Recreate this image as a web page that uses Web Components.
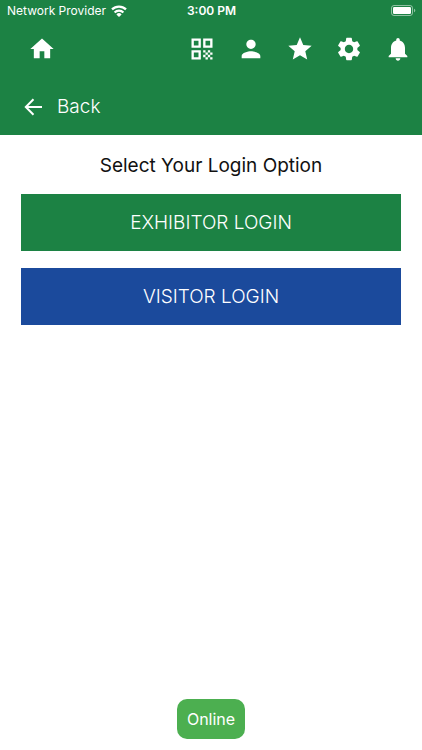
<!DOCTYPE html>
<html lang="en">
<head>
<meta charset="utf-8">
<meta name="viewport" content="width=device-width, initial-scale=1">
<title>Login</title>
<style>
  html, body { height: 100%; }
  body {
    margin: 0;
    background: #fff;
    color: #111;
    font-family: Inter, "Liberation Sans", sans-serif;
    --brand: #1c8244;
    --visitor: #1b4a9c;
  }
</style>
</head>

<template id="status-bar-template">
  <style>
    :host {
      display: grid;
      grid-template-columns: 1fr auto 1fr;
      align-items: center;
      height: 22px;
      padding: 0 6px 0 7px;
      font-size: 12px;
      line-height: 22px;
    }
    .carrier { display: flex; align-items: center; gap: 5px; white-space: nowrap; }
    .time { font-weight: 600; }
    .battery { justify-self: end; }
    svg { display: block; }
  </style>
  <div class="carrier">
    <slot name="carrier"></slot>
    <svg width="16" height="12" viewBox="0 0 16 12" fill="none" stroke="#fff" stroke-width="2.2" aria-hidden="true">
      <path d="M1 4.4a10 10 0 0 1 14 0M3.6 7.400a6.200 6.200 0 0 1 8.800 0"/>
      <path d="M8 12 5.400 9.400a3.600 3.600 0 0 1 5.200 0z" fill="#fff" stroke="none"/>
    </svg>
  </div>
  <div class="time"><slot name="time"></slot></div>
  <svg class="battery" width="25" height="12" viewBox="0 0 25 12" aria-hidden="true">
    <rect x=".5" y=".5" width="21" height="10" rx="2.5" fill="none" stroke="#fff" stroke-opacity=".5"/>
    <rect x="2" y="2" width="18" height="7" rx="1.2" fill="#fff"/>
    <path d="M23 3.7v3.6c.8-.3 1.3-1 1.3-1.8s-.5-1.500-1.300-1.800z" fill="#fff" fill-opacity=".5"/>
  </svg>
</template>

<template id="icon-button-template">
  <style>
    :host { display: block; }
    button {
      display: flex;
      align-items: center;
      justify-content: center;
      width: 49px;
      height: 54px;
      margin: 0;
      padding: 0;
      border: 0;
      background: none;
      color: inherit;
      cursor: pointer;
    }
    svg { display: block; fill: currentColor; }
  </style>
  <button type="button"><svg width="28" height="28" viewBox="0 0 24 24" aria-hidden="true"></svg></button>
</template>

<template id="app-header-template">
  <style>
    :host { display: block; background: var(--brand); color: #fff; }
    nav { display: flex; padding-left: 17px; height: 54px; }
    .actions { display: flex; margin-left: auto; }
    .back {
      display: flex;
      align-items: center;
      gap: 12px;
      width: max-content;
      height: 57px;
      padding: 2px 21px 0;
      color: inherit;
      font-size: 19px;
      font-weight: 300;
      line-height: 24px;
      text-decoration: none;
    }
    .back svg { display: block; fill: none; stroke: currentColor; stroke-width: 2; }
  </style>
  <slot name="status"></slot>
  <nav aria-label="Main">
    <slot name="home"></slot>
    <div class="actions"><slot></slot></div>
  </nav>
  <a class="back" href="#back">
    <svg width="24" height="24" viewBox="0 0 24 24" aria-hidden="true">
      <path d="M21 12H5M12.500 4.300 4.800 12l7.700 7.700"/>
    </svg>
    <slot name="back"></slot>
  </a>
</template>

<template id="login-button-template">
  <style>
    :host { display: block; }
    button {
      display: block;
      width: 100%;
      height: 57px;
      margin: 0;
      padding: 0;
      border: 0;
      background: var(--button-color, var(--brand));
      color: #fff;
      font: inherit;
      font-size: 19px;
      font-weight: 300;
      line-height: 24px;
      cursor: pointer;
    }
  </style>
  <button type="button"><slot></slot></button>
</template>

<template id="online-status-template">
  <style>
    :host {
      display: block;
      padding: 8px 10px;
      border-radius: 10px;
      background: #4caf50;
      color: #fff;
      font-size: 16px;
      line-height: 24px;
    }
  </style>
  <slot></slot>
</template>

<template id="login-page-template">
  <style>
    :host { display: flex; flex-direction: column; min-height: 100%; }
    main {
      display: flex;
      flex-direction: column;
      gap: 17px;
      flex: 1;
      padding: 20px 21px;
    }
    h1 {
      margin: 0;
      font-size: 19px;
      font-weight: 400;
      line-height: 22px;
      text-align: center;
    }
    footer { display: flex; justify-content: center; padding-bottom: 11px; }
  </style>
  <app-header>
    <status-bar slot="status">
      <span slot="carrier">Network Provider</span>
      <span slot="time">3:00 PM</span>
    </status-bar>
    <icon-button slot="home" icon="home" label="Home"></icon-button>
    <icon-button icon="qr" label="QR code"></icon-button>
    <icon-button icon="person" label="Profile"></icon-button>
    <icon-button icon="star" label="Favourites"></icon-button>
    <icon-button icon="gear" label="Settings"></icon-button>
    <icon-button icon="bell" label="Notifications"></icon-button>
    <span slot="back">Back</span>
  </app-header>
  <main>
    <h1>Select Your Login Option</h1>
    <login-button>EXHIBITOR LOGIN</login-button>
    <login-button style="--button-color: var(--visitor)">VISITOR LOGIN</login-button>
  </main>
  <footer><online-status>Online</online-status></footer>
</template>

<body>
<login-page></login-page>
<script>

const icons = {
  home: 'M10 20v-6h4v6h5v-8h3L12 3 2 12h3v8z',
  qr: 'M3 11h8V3H3zm2-6h4v4H5zM3 21h8v-8H3zm2-6h4v4H5zM13 3v8h8V3zm6 6h-4V5h4zM19 19h2v2h-2zM13 13h2v2h-2zM15 15h2v2h-2zM13 17h2v2h-2zM15 19h2v2h-2zM17 17h2v2h-2zM17 13h2v2h-2zM19 15h2v2h-2z',
  person: 'M12 12c2.210 0 4-1.790 4-4s-1.790-4-4-4-4 1.790-4 4 1.790 4 4 4zm0 2c-2.670 0-8 1.340-8 4v2h16v-2c0-2.660-5.330-4-8-4z',
  star: 'M12 17.270 18.180 21l-1.640-7.030L22 9.240l-7.190-.61L12 2 9.190 8.630 2 9.240l5.460 4.730L5.820 21z',
  gear: 'M19.140 12.940c.04-.3.06-.61.06-.94 0-.32-.02-.64-.07-.94l2.030-1.580c.18-.14.23-.41.12-.61l-1.920-3.320c-.12-.22-.37-.29-.59-.22l-2.390.96c-.5-.38-1.030-.7-1.620-.94l-.36-2.540c-.04-.24-.24-.41-.48-.41h-3.840c-.24 0-.43.17-.47.41l-.36 2.540c-.59.24-1.130.57-1.620.94l-2.390-.96c-.22-.08-.47 0-.59.22L2.740 8.870c-.12.21-.08.47.12.61l2.030 1.580c-.05.3-.09.63-.09.94s.02.64.07.94l-2.030 1.580c-.18.14-.23.41-.12.61l1.920 3.320c.12.22.37.29.59.22l2.390-.96c.5.38 1.030.7 1.620.94l.36 2.540c.05.24.24.41.48.41h3.840c.24 0 .44-.17.47-.41l.36-2.540c.59-.24 1.130-.56 1.620-.94l2.390.96c.22.08.47 0 .59-.22l1.920-3.320c.12-.22.07-.47-.12-.61zM12 15.600c-1.980 0-3.600-1.620-3.600-3.600s1.620-3.600 3.600-3.600 3.600 1.620 3.600 3.600-1.620 3.600-3.600 3.600z',
  bell: 'M12 22c1.100 0 2-.9 2-2h-4c0 1.100.89 2 2 2zm6-6v-5c0-3.070-1.640-5.640-4.500-6.320V4c0-.83-.67-1.500-1.500-1.500s-1.500.67-1.500 1.500v.68C7.630 5.360 6 7.920 6 11v5l-2 2v1h16v-1z'
};

/* Clone a template into an open shadow root */
class TemplateElement extends HTMLElement {
  constructor() {
    super();
    const template = document.getElementById(this.localName + '-template');
    this.attachShadow({mode: 'open'}).appendChild(template.content.cloneNode(true));
  }
}

customElements.define('status-bar', class extends TemplateElement {});
customElements.define('app-header', class extends TemplateElement {});
customElements.define('login-button', class extends TemplateElement {});
customElements.define('online-status', class extends TemplateElement {});

/* Toolbar button, picks its glyph by name */
customElements.define('icon-button', class extends TemplateElement {
  connectedCallback() {
    const path = document.createElementNS('http://www.w3.org/2000/svg', 'path');
    path.setAttribute('d', icons[this.getAttribute('icon')]);
    path.setAttribute('fill-rule', 'evenodd');
    this.shadowRoot.querySelector('svg').replaceChildren(path);
    this.shadowRoot.querySelector('button').setAttribute('aria-label', this.getAttribute('label'));
  }
});

customElements.define('login-page', class extends TemplateElement {});

</script>
</body>
</html>
